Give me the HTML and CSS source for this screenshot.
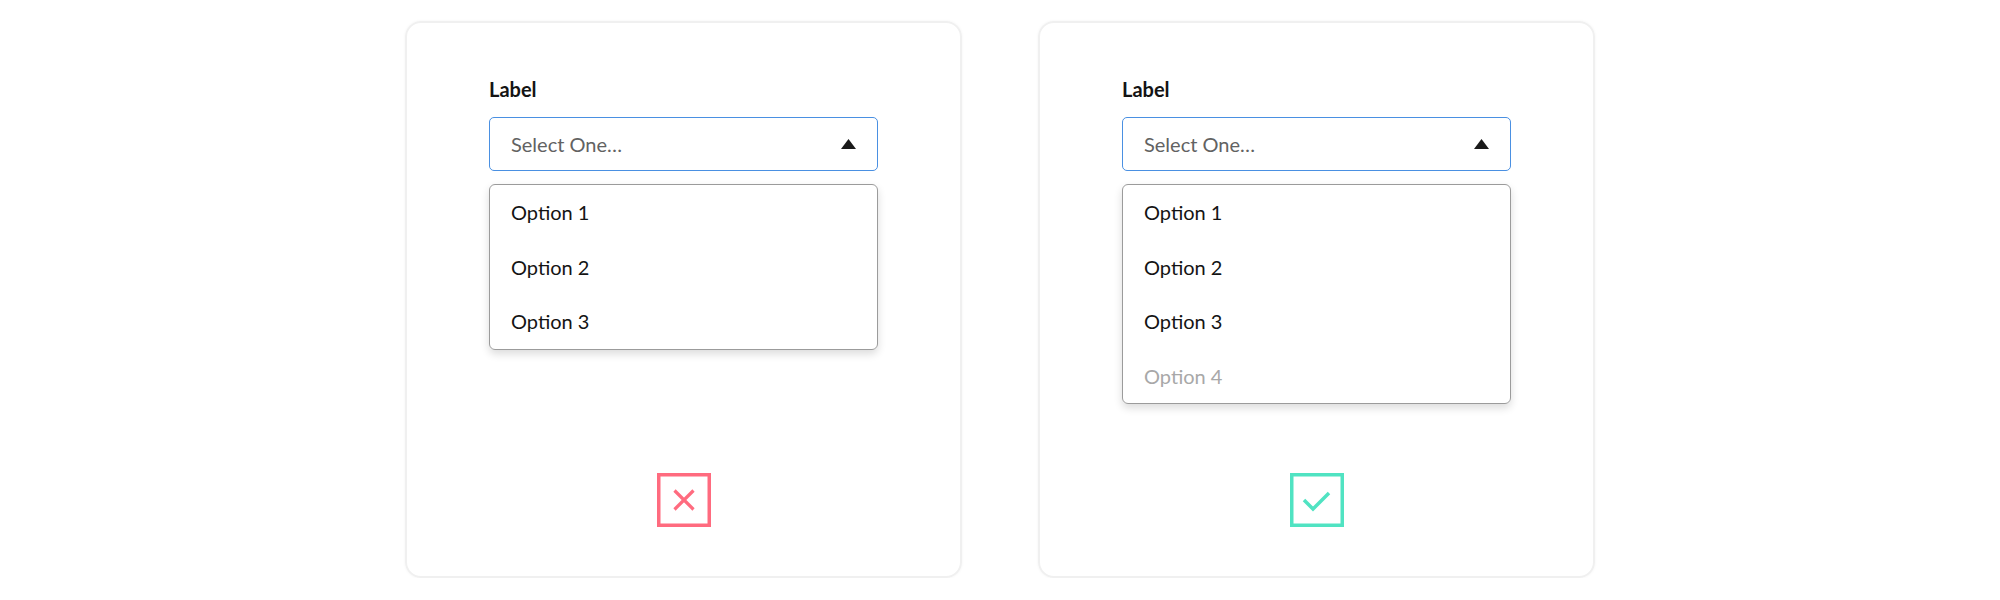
FILE: index.html
```html
<!DOCTYPE html>
<html lang="en">
<head>
<meta charset="utf-8">
<title>Select examples</title>
<link rel="stylesheet" href="styles.css">
</head>
<body>
<main class="row">
  <section class="card">
    <div class="label">Label</div>
    <div class="select">
      <span class="placeholder">Select One…</span>
      <svg class="caret" width="15" height="10" viewBox="0 0 15 10"><polygon points="7.5,0 15,10 0,10" fill="#1a1a1a"/></svg>
    </div>
    <ul class="menu">
      <li class="option">Option 1</li>
      <li class="option">Option 2</li>
      <li class="option">Option 3</li>
    </ul>
    <div class="verdict">
      <svg width="54" height="54" viewBox="0 0 54 54">
        <rect x="1.75" y="1.75" width="50.5" height="50.5" fill="none" stroke="#ff6b7f" stroke-width="3.5"/>
        <path d="M17.5 17.5 L36.5 36.5 M36.5 17.5 L17.5 36.5" stroke="#ff6b7f" stroke-width="3.2" fill="none"/>
      </svg>
    </div>
  </section>
  <section class="card">
    <div class="label">Label</div>
    <div class="select">
      <span class="placeholder">Select One…</span>
      <svg class="caret" width="15" height="10" viewBox="0 0 15 10"><polygon points="7.5,0 15,10 0,10" fill="#1a1a1a"/></svg>
    </div>
    <ul class="menu">
      <li class="option">Option 1</li>
      <li class="option">Option 2</li>
      <li class="option">Option 3</li>
      <li class="option faded">Option 4</li>
    </ul>
    <div class="verdict">
      <svg width="54" height="54" viewBox="0 0 54 54">
        <rect x="1.75" y="1.75" width="50.5" height="50.5" fill="none" stroke="#50e3c2" stroke-width="3.5"/>
        <path d="M14 27 L23 36 L39 20" stroke="#50e3c2" stroke-width="3.5" fill="none"/>
      </svg>
    </div>
  </section>
</main>
</body>
</html>
```
FILE: styles.css
```css
html, body {
  margin: 0;
  padding: 0;
  background: #ffffff;
}
body {
  font-family: Lato, "Noto Sans", sans-serif;
  color: #141414;
}
.row {
  display: flex;
  justify-content: center;
  gap: 76px;
  padding-top: 21px;
}
.card {
  box-sizing: border-box;
  width: 557px;
  height: 557px;
  border: 2px solid #f0f0f0;
  border-radius: 16px;
  box-shadow: 0 0 3px rgba(0, 0, 0, 0.05);
  padding: 54px 82px 49px;
  display: flex;
  flex-direction: column;
}
.label {
  font-size: 20px;
  line-height: 24px;
  font-weight: 700;
  color: #141414;
}
.select {
  box-sizing: border-box;
  margin-top: 16px;
  height: 54px;
  border: 1px solid #4a90e2;
  border-radius: 5px;
  padding: 0 21px;
  display: flex;
  align-items: center;
  justify-content: space-between;
}
.placeholder {
  font-size: 20px;
  line-height: 24px;
  color: #626262;
}
.caret {
  display: block;
}
.menu {
  list-style: none;
  margin: 13px 0 0;
  padding: 0;
  border: 1px solid #9b9b9b;
  border-radius: 6px;
  box-shadow: 0 4px 8px rgba(0, 0, 0, 0.14);
}
.option {
  box-sizing: border-box;
  height: 54.5px;
  padding: 0 21px;
  display: flex;
  align-items: center;
  font-size: 20px;
  line-height: 24px;
  color: #141414;
}
.option.faded {
  color: #a8a8a8;
}
.verdict {
  margin-top: auto;
  align-self: center;
  line-height: 0;
}
```
